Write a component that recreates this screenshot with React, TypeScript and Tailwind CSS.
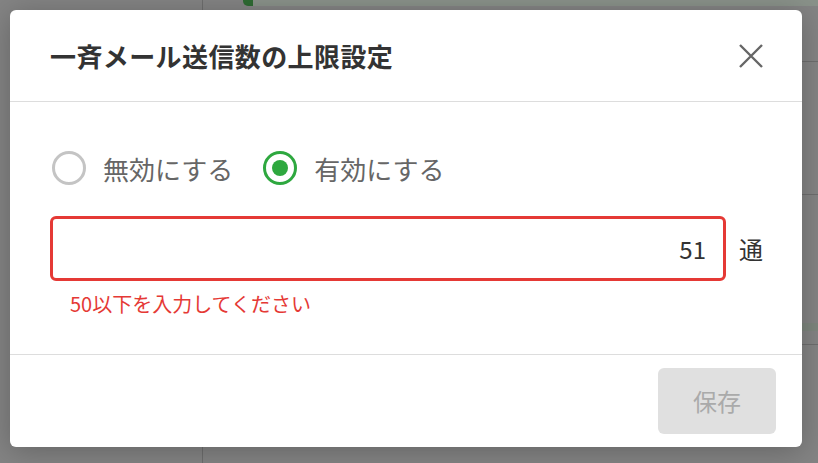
import React from "react";

export default function App() {
  const font = { fontFamily: '"Noto Sans CJK JP", "Noto Sans", sans-serif' };
  return (
    <div className="relative w-[818px] h-[463px] overflow-hidden bg-[#848484]" style={font}>
      {/* dimmed background page */}
      <div className="absolute left-[202px] top-0 h-full w-px bg-[#6e6e6e]" />
      <div className="absolute left-[250px] top-0 right-0 h-[6px] bg-[#8a928a]" />
      <div className="absolute left-[243px] top-0 w-[10px] h-[6px] rounded-bl-[5px] bg-[#2f6b33]" />
      <div className="absolute left-[802px] right-0 top-[61px] h-px bg-[#6e6e6e]" />
      <div className="absolute left-[802px] right-0 top-[194px] h-px bg-[#6e6e6e]" />
      <div className="absolute left-[802px] right-0 top-[323px] h-[8px] bg-[#7e867e]" />
      <div className="absolute left-[802px] right-0 top-[344px] h-px bg-[#6e6e6e]" />

      {/* dialog */}
      <div className="absolute left-[10px] top-[10px] w-[792px] h-[437px] bg-white rounded-[6px] shadow-[0_4px_30px_rgba(0,0,0,0.25)] flex flex-col">
        <div className="h-[92px] shrink-0 flex items-center justify-between pl-[40px] pr-[38px] border-b border-[#dddddd]">
          <h1 className="text-[26px] font-bold text-[#333333] tracking-[0.4px]">一斉メール送信数の上限設定</h1>
          <svg width="26" height="26" viewBox="0 0 26 26" className="text-[#666666]">
            <path d="M2 2 L24 24 M24 2 L2 24" stroke="currentColor" strokeWidth="2.4" fill="none" />
          </svg>
        </div>

        <div className="flex-1 pl-[40px] pr-[36px] pt-[49px]">
          <div className="flex items-center h-[34px] text-[26px] text-[#666666]">
            <div className="flex items-center ml-[2px]">
              <span className="w-[34px] h-[34px] rounded-full border-[3px] border-[#c4c4c4] bg-white" />
              <span className="ml-[17px]">無効にする</span>
            </div>
            <div className="flex items-center ml-[30px]">
              <span className="w-[34px] h-[34px] rounded-full border-[3px] border-[#2ea83f] bg-white flex items-center justify-center">
                <span className="w-[16px] h-[16px] rounded-full bg-[#2ea83f]" />
              </span>
              <span className="ml-[17px]">有効にする</span>
            </div>
          </div>

          <div className="flex items-center mt-[31px]">
            <div className="w-[676px] shrink-0 h-[65px] rounded-[6px] border-[3px] border-[#e53935] flex items-center justify-end pr-[17px] text-[24px] text-[#333333]">
              51
            </div>
            <span className="ml-[13px] shrink-0 text-[24px] text-[#333333]">通</span>
          </div>
          <div className="mt-[11px] ml-[20px] text-[20px] leading-[24px] text-[#e53935]">50以下を入力してください</div>
        </div>

        <div className="h-[93px] shrink-0 border-t border-[#dddddd] flex items-start justify-end pr-[26px] pt-[13px]">
          <button className="w-[118px] h-[66px] rounded-[6px] bg-[#e0e0e0] text-[24px] text-[#aaaaaa]">保存</button>
        </div>
      </div>
    </div>
  );
}
